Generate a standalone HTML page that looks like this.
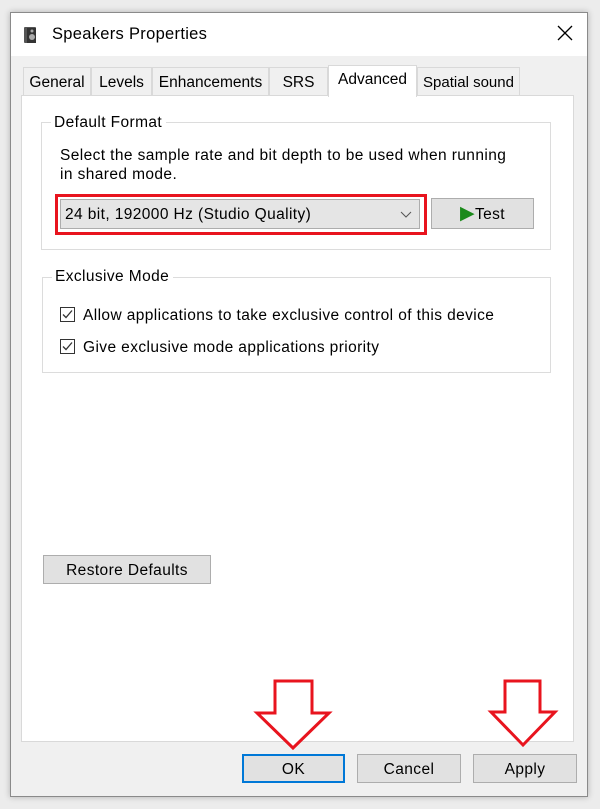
<!DOCTYPE html>
<html><head><style>
*{margin:0;padding:0;box-sizing:border-box}
body{width:600px;height:809px;background:#ececec;position:relative;overflow:hidden;font-family:"Liberation Sans",sans-serif;font-size:15.5px;letter-spacing:.4px;color:#000;white-space:nowrap}
.a{position:absolute}
.btn{position:absolute;background:#e1e1e1;border:1px solid #adadad;text-align:center;line-height:29px}
.grp{position:absolute;border:1px solid #dcdcdc}
.lbl{position:absolute;background:#fff;padding:0 4px 0 3px;top:-10px;left:9px;line-height:18px}
.tab{position:absolute;top:67px;height:28px;border:1px solid #d9d9d9;border-bottom:none;background:#f0f0f0;line-height:30px;text-align:center;letter-spacing:0}
.cb{position:absolute;width:15px;height:15px;border:1px solid #333;background:#fff}
</style></head><body>
<div class="a" style="left:10px;top:12px;width:578px;height:785px;background:#f0f0f0;border:1px solid #8a8a8a;box-shadow:0 0 6px rgba(0,0,0,.25)"></div>
<div class="a" style="left:11px;top:13px;width:576px;height:43px;background:#fff"></div>
<svg class="a" style="left:23px;top:26px" width="16" height="18" viewBox="0 0 16 18"><rect x="1" y="1" width="12" height="16" rx="1" fill="#555"/><rect x="4" y="2" width="9" height="15" fill="#333"/><circle cx="9" cy="11" r="3" fill="#aaa"/><circle cx="9" cy="5" r="1.5" fill="#aaa"/></svg>
<div class="a" style="left:52px;top:25px;font-size:16.5px;letter-spacing:.3px">Speakers Properties</div>
<svg class="a" style="left:557px;top:25px" width="16" height="16"><path d="M1 1L15 15M15 1L1 15" stroke="#000" stroke-width="1.3"/></svg>
<div class="tab" style="left:23px;width:68px">General</div>
<div class="tab" style="left:91px;width:61px">Levels</div>
<div class="tab" style="left:152px;width:117px">Enhancements</div>
<div class="tab" style="left:269px;width:59px">SRS</div>
<div class="tab" style="left:417px;width:103px;font-size:15px">Spatial sound</div>
<div class="a" style="left:21px;top:95px;width:553px;height:647px;background:#fff;border:1px solid #d9d9d9"></div>
<div class="tab" style="left:328px;top:65px;width:89px;height:32px;background:#fff;line-height:28px;z-index:2">Advanced</div>
<div class="grp" style="left:41px;top:122px;width:510px;height:128px"><div class="lbl" style="top:-9px">Default Format</div></div>
<div class="a" style="left:60px;top:146px;line-height:19px">Select the sample rate and bit depth to be used when running<br>in shared mode.</div>
<div class="a" style="left:55px;top:194px;width:372px;height:41px;border:3px solid #e8141e"></div>
<div class="a" style="left:60px;top:199px;width:360px;height:30px;background:#e5e5e5;border:1px solid #adadad;line-height:30px;padding-left:4px">24 bit, 192000 Hz (Studio Quality)</div>
<svg class="a" style="left:400px;top:211px" width="12" height="8"><path d="M1 1L6 6L11 1" stroke="#555" fill="none"/></svg>
<div class="btn" style="left:431px;top:198px;width:103px;height:31px;line-height:29px"><span style="color:#1a8a1a;font-size:19px">&#9654;</span>Test</div>
<div class="grp" style="left:42px;top:277px;width:509px;height:96px"><div class="lbl">Exclusive Mode</div></div>
<div class="cb" style="left:60px;top:307px"></div>
<svg class="a" style="left:61px;top:308px" width="13" height="13"><path d="M2 6.5L5 9.5L11 2.5" stroke="#333" fill="none" stroke-width="1.3"/></svg>
<div class="a" style="left:83px;top:307px">Allow applications to take exclusive control of this device</div>
<div class="cb" style="left:60px;top:339px"></div>
<svg class="a" style="left:61px;top:340px" width="13" height="13"><path d="M2 6.5L5 9.5L11 2.5" stroke="#333" fill="none" stroke-width="1.3"/></svg>
<div class="a" style="left:83px;top:339px">Give exclusive mode applications priority</div>
<div class="btn" style="left:43px;top:555px;width:168px;height:29px">Restore Defaults</div>
<div class="btn" style="left:242px;top:754px;width:103px;height:29px;border:2px solid #0078d7;line-height:27px">OK</div>
<div class="btn" style="left:357px;top:754px;width:104px;height:29px">Cancel</div>
<div class="btn" style="left:473px;top:754px;width:104px;height:29px">Apply</div>
<svg class="a" style="left:0;top:0" width="600" height="809">
<path d="M275 681H312V713H329L293 748L257 713H275Z" fill="#fff" stroke="#e8141e" stroke-width="3" stroke-linejoin="miter"/>
<path d="M505 681H540V712H555L523 745L491 712H505Z" fill="#fff" stroke="#e8141e" stroke-width="3"/>
</svg>
</body></html>
